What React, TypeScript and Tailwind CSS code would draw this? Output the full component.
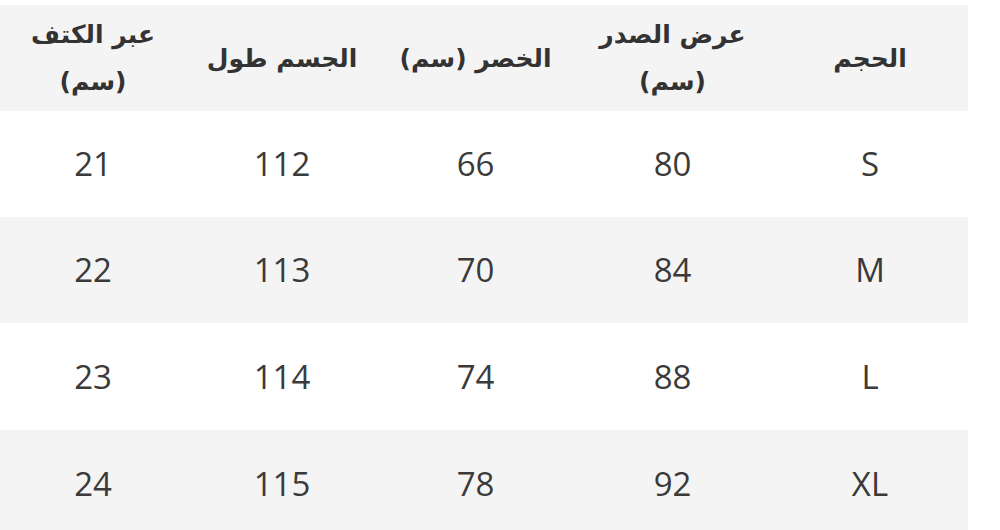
import React from "react";

const headers: string[][] = [
  ["الحجم"],
  ["عرض الصدر", "(سم)"],
  ["الخصر (سم)"],
  ["الجسم طول"],
  ["عبر الكتف", "(سم)"],
];

const rows: string[][] = [
  ["S", "80", "66", "112", "21"],
  ["M", "84", "70", "113", "22"],
  ["L", "88", "74", "114", "23"],
  ["XL", "92", "78", "115", "24"],
];

const rowCls = [
  "h-[106px] bg-white",
  "h-[106px] bg-[#f4f4f4]",
  "h-[107px] bg-white",
  "h-[107px] bg-[#f4f4f4]",
];

export default function App() {
  return (
    <div className="w-[1000px] h-[530px] overflow-hidden bg-white pt-[5px]">
      <div dir="rtl" className="w-[968px] flex flex-col">
        <div className="grid grid-cols-[196px_199px_195px_192px_186px] h-[106px] bg-[#f4f4f4]">
          {headers.map((lines, i) => (
            <div
              key={i}
              className="flex flex-col items-center justify-center text-[#333] font-bold text-[25px] leading-[47px]"
              style={{ fontFamily: '"DejaVu Sans", "Noto Sans", sans-serif' }}
            >
              {lines.map((l, j) => (
                <span key={j}>{l}</span>
              ))}
            </div>
          ))}
        </div>
        {rows.map((r, i) => (
          <div
            key={i}
            className={`grid grid-cols-[196px_199px_195px_192px_186px] ${rowCls[i]}`}
          >
            {r.map((c, j) => (
              <div
                key={j}
                className="flex items-center justify-center text-[#3a3a3a] text-[33px] font-['Open_Sans',sans-serif]"
              >
                {c}
              </div>
            ))}
          </div>
        ))}
      </div>
    </div>
  );
}
